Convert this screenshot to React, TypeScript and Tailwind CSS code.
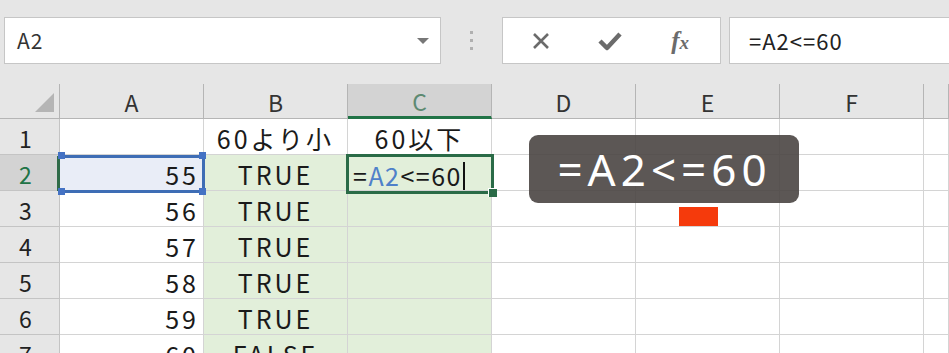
import React from "react";

const COLS = ["A", "B", "C", "D", "E", "F", ""];
const COLW = [144, 144, 144, 144, 144, 144, 25];
const ROWS = [1, 2, 3, 4, 5, 6, 7];

const font = { fontFamily: '"Noto Sans CJK JP", "Noto Sans", sans-serif' };

type CellData = { text?: React.ReactNode; align?: "left" | "right" | "center"; fill?: string };

function getCell(r: number, c: number): CellData {
  const aVals: Record<number, string> = { 2: "55", 3: "56", 4: "57", 5: "58", 6: "59", 7: "60" };
  if (c === 0) {
    return { text: aVals[r], align: "right", fill: r === 2 ? "bg-[#e9edf7]" : "bg-white" };
  }
  if (c === 1) {
    if (r === 1) return { text: "60より小", align: "center", fill: "bg-white" };
    return { text: r === 7 ? "FALSE" : "TRUE", align: "center", fill: "bg-[#e2efda]" };
  }
  if (c === 2) {
    if (r === 1) return { text: "60以下", align: "center", fill: "bg-white" };
    return { text: "", align: "left", fill: "bg-[#e2efda]" };
  }
  return { fill: "bg-white" };
}

export default function App() {
  return (
    <div className="w-[949px] h-[353px] overflow-hidden bg-[#e6e6e6] text-[#222]" style={font}>
      {/* formula bar area */}
      <div className="h-[84px] flex items-start pt-[17px] pl-[4px]">
        <div className="w-[437px] h-[47px] bg-white border border-[#c6c6c6] flex items-center pl-[12px] pr-[11px]">
          <span className="text-[21px] text-[#333] tracking-[1px]">A2</span>
          <div className="ml-auto w-0 h-0 border-l-[6px] border-r-[6px] border-t-[6px] border-l-transparent border-r-transparent border-t-[#777]" />
        </div>
        <div className="w-[61px] h-[47px] flex flex-col items-center justify-center gap-[5px]">
          <div className="w-[3px] h-[3px] bg-[#b0b0b0]" />
          <div className="w-[3px] h-[3px] bg-[#b0b0b0]" />
          <div className="w-[3px] h-[3px] bg-[#b0b0b0]" />
        </div>
        <div className="w-[219px] h-[47px] bg-white border border-[#c6c6c6] flex items-center">
          <div className="w-[76px] flex justify-center pl-[1px]">
            <svg width="20" height="20" viewBox="0 0 20 20">
              <path d="M3 3 L17 17 M17 3 L3 17" stroke="#6b6b6b" strokeWidth="2.6" />
            </svg>
          </div>
          <div className="w-[62px] flex justify-center">
            <svg width="24" height="20" viewBox="0 0 24 20">
              <path d="M2 10 L9 17 L22 3" stroke="#6b6b6b" strokeWidth="4.5" fill="none" strokeLinejoin="round" />
            </svg>
          </div>
          <div className="w-[80px] flex justify-center">
            <span className="text-[25px] italic text-[#6b6b6b] font-bold leading-none" style={{ fontFamily: '"Liberation Serif", serif' }}>
              f<span className="text-[19px]">x</span>
            </span>
          </div>
        </div>
        <div className="ml-[8px] flex-1 h-[47px] bg-white border border-[#c6c6c6] border-r-0 flex items-center pl-[19px]">
          <span className="text-[22px] text-[#222] tracking-[1px]">=A2&lt;=60</span>
        </div>
      </div>

      {/* sheet */}
      <div className="relative">
        {/* header row */}
        <div className="flex h-[35px] bg-[#e6e6e6]">
          <div className="w-[60px] h-full border-r border-b border-[#b5b5b5] flex items-end justify-end pr-[5px] pb-[6px]">
            <div className="w-0 h-0" style={{ borderBottom: "19px solid #b5b5b5", borderLeft: "19px solid transparent" }} />
          </div>
          {COLS.map((c, i) => (
            <div
              key={i}
              className={
                "h-full border-r flex items-center justify-center pt-[3px] text-[23px] " +
                (c === "C"
                  ? "bg-[#d3d3d3] border-[#b5b5b5] border-b-[3px] border-b-[#217346] text-[#5e8a72]"
                  : "border-b border-[#b5b5b5] text-[#333]")
              }
              style={{ width: COLW[i] }}
            >
              {c}
            </div>
          ))}
        </div>
        {ROWS.map((r) => (
          <div key={r} className="flex h-[36px]">
            <div
              className={
                "w-[60px] h-full border-r border-b border-[#c4c4c4] flex items-center justify-center pr-[8px] pt-[3px] text-[23px] " +
                (r === 2 ? "bg-[#d3d3d3] text-[#217346]" : "bg-[#e6e6e6] text-[#222]")
              }
            >
              {r}
            </div>
            {COLS.map((_, c) => {
              const d = getCell(r, c);
              return (
                <div
                  key={c}
                  className={
                    "h-full border-r border-b border-[#d4d4d4] flex items-center pt-[4px] text-[25px] tracking-[3px] text-[#1a1a1a] " +
                    (d.fill ?? "bg-white") +
                    (d.align === "right" ? " justify-end pr-[4px]" : d.align === "center" ? " justify-center" : " pl-[5px]")
                  }
                  style={{ width: COLW[c] }}
                >
                  {d.text}
                </div>
              );
            })}
          </div>
        ))}

        {/* reference highlight around A2 */}
        <div className="absolute left-[64px] top-[71px] w-[135px] h-[3px] bg-[#3e6db5]" />
        <div className="absolute left-[64px] top-[106px] w-[135px] h-[3px] bg-[#3e6db5]" />
        <div className="absolute left-[202px] top-[75px] w-[3px] h-[30px] bg-[#3e6db5]" />
        <div className="absolute left-[57px] top-[72px] w-[3px] h-[35px] bg-[#2f6b48]" />
        <div className="absolute left-[58px] top-[68px] w-[7px] h-[7px] bg-[#4472c4]" />
        <div className="absolute left-[199px] top-[68px] w-[7px] h-[7px] bg-[#4472c4]" />
        <div className="absolute left-[58px] top-[104px] w-[7px] h-[7px] bg-[#4472c4]" />
        <div className="absolute left-[199px] top-[104px] w-[7px] h-[7px] bg-[#4472c4]" />

        {/* active cell C2 */}
        <div className="absolute left-[346px] top-[70px] w-[148px] h-[40px] border-[3px] border-[#2a6b47] flex items-center pl-[4px] pt-[3px]">
          <span className="text-[25px] tracking-[1.5px] text-[#1a1a1a] leading-none">
            =<span className="text-[#4f81c9]">A2</span>&lt;=60
          </span>
          <span className="ml-[1px] w-[2px] h-[28px] bg-[#111]" />
        </div>
        <div className="absolute left-[488px] top-[104px] w-[9px] h-[9px] bg-[#2a6b47] border-l-[1px] border-t-[1px] border-white" />

        {/* tooltip */}
        <div className="absolute left-[529px] top-[51px] w-[270px] h-[68px] rounded-[9px] bg-[#4a4542]/90 flex items-center justify-center">
          <span className="text-[44px] text-white tracking-[5px] leading-none pl-[1px]" style={{ fontFamily: '"Noto Sans", sans-serif' }}>
            =A2&lt;=60
          </span>
        </div>
        <div className="absolute left-[679px] top-[123px] w-[39px] h-[19px] bg-[#f53a0c]" />
      </div>
    </div>
  );
}
